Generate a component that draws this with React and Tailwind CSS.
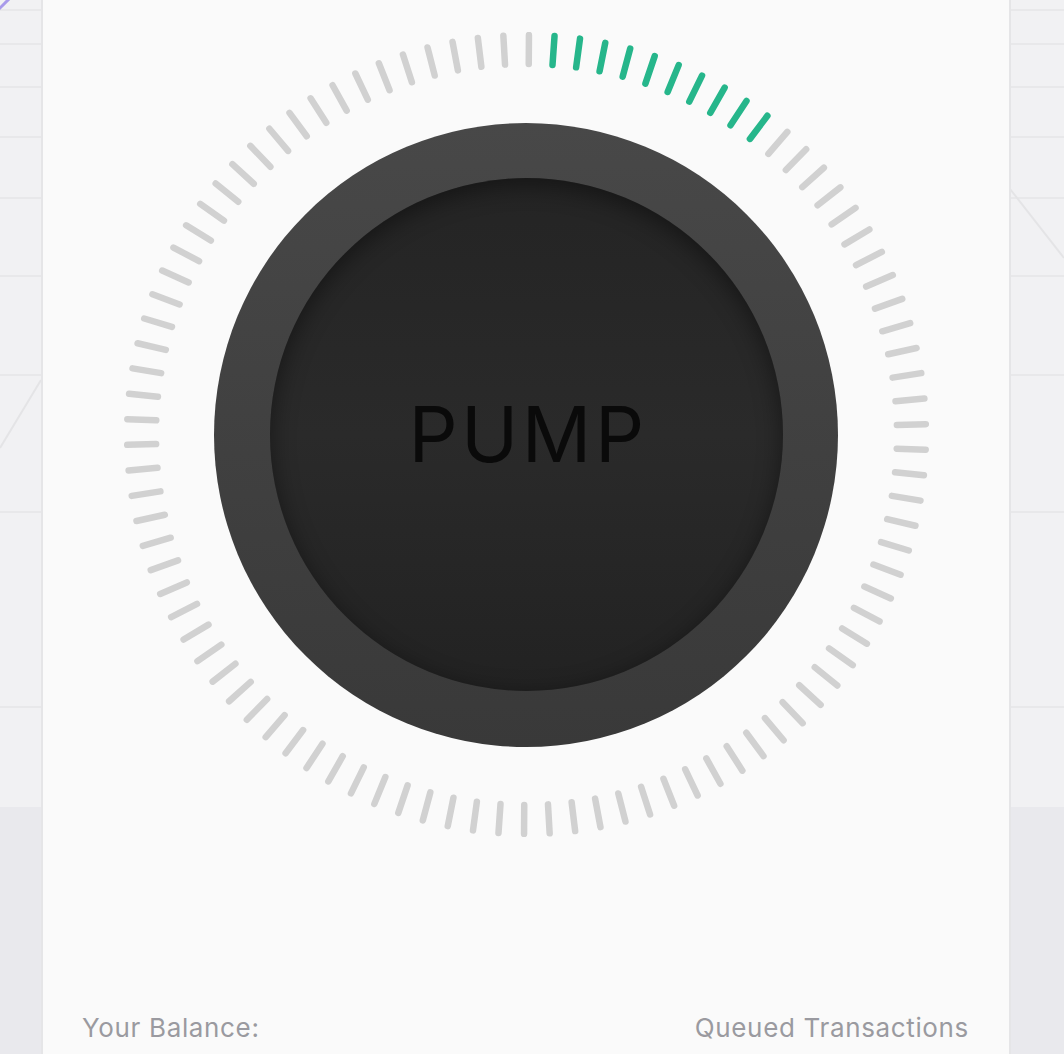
import React from "react";

const GRID_Y = [10, 44, 87, 137, 198, 276, 375, 512, 707];

function ChartBackdrop() {
  return (
    <svg className="absolute inset-0" width="1064" height="1054" viewBox="0 0 1064 1054">
      <rect x="0" y="0" width="1064" height="1054" fill="#f1f1f3" />
      {GRID_Y.map((y) => (
        <line key={y} x1="0" x2="1064" y1={y} y2={y} stroke="#e8e8ea" strokeWidth="2" />
      ))}
      <rect x="0" y="807" width="1064" height="247" fill="#e9e9ed" />
      <line x1="0" y1="448" x2="41" y2="380" stroke="#e4e4e6" strokeWidth="2" />
      <line x1="1010" y1="189" x2="1064" y2="258" stroke="#e4e4e6" strokeWidth="2" />
      <line x1="-2" y1="10" x2="10" y2="-2" stroke="#a99bea" strokeWidth="3" />
    </svg>
  );
}

function TickRing() {
  const N = 98;
  const c = 402.5;
  const ticks = Array.from({ length: N }, (_, k) => {
    const a = ((k * 360) / N + 0.35) * (Math.PI / 180);
    const s = Math.sin(a);
    const co = Math.cos(a);
    return {
      k,
      x1: c + 370.5 * s,
      y1: c - 370.5 * co,
      x2: c + 399.5 * s,
      y2: c - 399.5 * co,
      green: k >= 1 && k <= 10,
    };
  });
  return (
    <svg className="absolute inset-0" width="805" height="805" viewBox="0 0 805 805">
      {ticks.map((t) => (
        <line
          key={t.k}
          x1={t.x1}
          y1={t.y1}
          x2={t.x2}
          y2={t.y2}
          stroke={t.green ? "#26b68b" : "#d1d1d1"}
          strokeWidth="6.5"
          strokeLinecap="round"
        />
      ))}
    </svg>
  );
}

export default function App() {
  return (
    <div className="relative w-[1064px] h-[1054px] overflow-hidden">
      <ChartBackdrop />
      <div className="relative ml-[41px] w-[970px] h-[1054px] bg-[#fafafa] border-x-2 border-[#e5e5e7] flex flex-col items-center pt-[32px]">
        <div className="relative w-[805px] h-[805px] flex items-center justify-center">
          <TickRing />
          <div className="relative w-[624px] h-[624px] rounded-full bg-gradient-to-b from-[#484848] to-[#393939] flex items-center justify-center">
            <div className="w-[513px] h-[513px] rounded-full bg-gradient-to-b from-[#242424] via-[#2a2a2a] to-[#222222] shadow-[inset_0_6px_24px_rgba(0,0,0,0.45)] flex items-center justify-center">
              <span className="text-[77px] leading-none tracking-[3.5px] text-[#0a0a0a] font-normal font-['Inter',sans-serif] pl-[4px]">
                PUMP
              </span>
            </div>
          </div>
        </div>
        <div className="w-full mt-[175px] flex justify-between pl-[39px] pr-[40px] text-[26px] leading-[32px] text-[#9a9aa0] font-['Inter',sans-serif] tracking-[0.65px]">
          <span>Your Balance:</span>
          <span>Queued Transactions</span>
        </div>
      </div>
    </div>
  );
}
